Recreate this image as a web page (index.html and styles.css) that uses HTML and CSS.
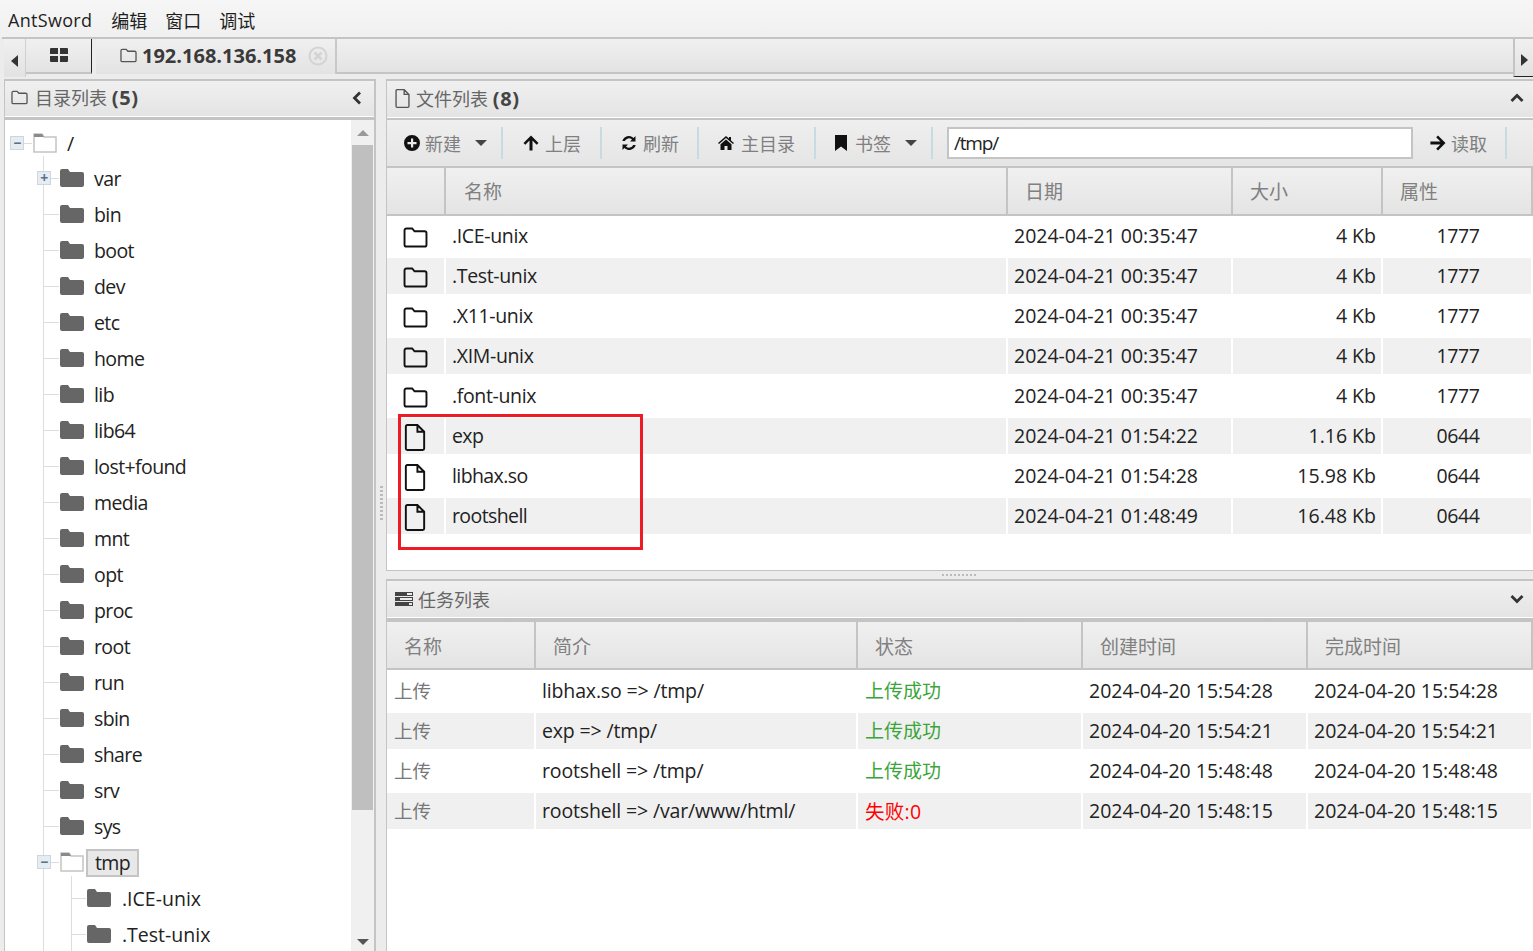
FILE: index.html
```html
<!DOCTYPE html>
<html lang="zh-CN">
<head>
  <meta charset="UTF-8" />
  <title>AntSword</title>
  <link rel="stylesheet" href="styles.css">
</head>
<body>
  <svg class="defs" width="0" height="0">
    <symbol id="folder-o" viewBox="0 0 26 22"><path d="M3.5 1.5h6l2.5 3h10.5a2 2 0 0 1 2 2v12a2 2 0 0 1-2 2h-19a2 2 0 0 1-2-2v-15a2 2 0 0 1 2-2z" fill="none" stroke="currentColor" stroke-width="2"/></symbol>
    <symbol id="file-o" viewBox="0 0 22 28"><path d="M3 1h10.5l7 7v17.5a1.5 1.5 0 0 1-1.500 1.500h-16a1.500 1.500 0 0 1-1.500-1.500v-23a1.500 1.500 0 0 1 1.500-1.500zM13.500 1v7h7" fill="none" stroke="currentColor" stroke-width="2"/></symbol>
    <symbol id="folder" viewBox="0 0 24 18"><path d="M0 2a2 2 0 0 1 2-2h6l2 3h12a2 2 0 0 1 2 2v11a2 2 0 0 1-2 2h-20a2 2 0 0 1-2-2z" fill="currentColor"/></symbol>
    <symbol id="tree-open" viewBox="0 0 24 20"><path d="M1 1h8l2 3h12v15h-22z" fill="#fff" stroke="#c4c4c4" stroke-width="1.500"/><path d="M1 1h8l2 3h-10z" fill="#8a8a8a"/></symbol>
    <symbol id="grid" viewBox="0 0 18 14"><path d="M0 1a1 1 0 0 1 1-1h7v6h-8zM10 0h7a1 1 0 0 1 1 1v5h-8zM0 8h8v6h-7a1 1 0 0 1-1-1zM10 8h8v5a1 1 0 0 1-1 1h-7z" fill="currentColor"/></symbol>
    <symbol id="plus-circle" viewBox="0 0 16 16"><path fill-rule="evenodd" d="M8 0a8 8 0 1 1 0 16a8 8 0 0 1 0-16zM7 3.500v3.500h-3.500v2.200h3.500v3.300h2.200v-3.300h3.300v-2.200h-3.300v-3.500z" fill="currentColor"/></symbol>
    <symbol id="arrow-up" viewBox="0 0 16 16"><path d="M8 .5l7.500 7.500-1.800 1.800-4.200-4.200v10h-3v-10l-4.200 4.200-1.800-1.800z" fill="currentColor"/></symbol>
    <symbol id="arrow-right" viewBox="0 0 16 16"><path d="M15.500 8l-7.500 7.500-1.800-1.800 4.200-4.200h-10v-3h10l-4.200-4.200 1.800-1.800z" fill="currentColor"/></symbol>
    <symbol id="refresh" viewBox="0 0 16 16"><path d="M14.500 1v5.500h-5.500l2-2a4.500 4.500 0 0 0-7.200 1.500h-2.500a6.800 6.800 0 0 1 11.300-3.100zM1.500 15v-5.500h5.500l-2 2a4.500 4.500 0 0 0 7.200-1.500h2.500a6.800 6.800 0 0 1-11.300 3.100z" fill="currentColor"/></symbol>
    <symbol id="home" viewBox="0 0 16 14"><path d="M8 0l3 2.600v-1.600h2v3.400l3 2.600-1 1.100-7-6-7 6-1-1.100zM8 3.500l5.500 4.700v5.800h-4v-4h-3v4h-4v-5.800z" fill="currentColor"/></symbol>
    <symbol id="bookmark" viewBox="0 0 12 16"><path d="M0 0h12v16l-6-4.500-6 4.500z" fill="currentColor"/></symbol>
    <symbol id="tasks" viewBox="0 0 18 14"><path fill-rule="evenodd" d="M0 0h18v4h-18zM12 1v2h5v-2zM0 5h18v4h-18zM5 6v2h12v-2zM0 10h18v4h-18zM14 11v2h3v-2z" fill="currentColor"/></symbol>
    <symbol id="close-circle" viewBox="0 0 20 20"><circle cx="10" cy="10" r="8.500" fill="none" stroke="currentColor" stroke-width="2.200"/><path d="M6.500 6.500l7 7M13.500 6.500l-7 7" stroke="currentColor" stroke-width="2.800"/></symbol>
    <symbol id="chev-left" viewBox="0 0 10 14"><path d="M8 1.500l-5.500 5.500 5.500 5.500" fill="none" stroke="currentColor" stroke-width="2.800"/></symbol>
    <symbol id="chev-up" viewBox="0 0 14 10"><path d="M1.500 8l5.500-5.500 5.500 5.500" fill="none" stroke="currentColor" stroke-width="2.800"/></symbol>
    <symbol id="chev-down" viewBox="0 0 14 10"><path d="M1.500 2l5.500 5.500 5.500-5.500" fill="none" stroke="currentColor" stroke-width="2.800"/></symbol>
  </svg>

  <nav class="menubar">
    <span class="menu-item">AntSword</span>
    <span class="menu-item">编辑</span>
    <span class="menu-item">窗口</span>
    <span class="menu-item">调试</span>
  </nav>

  <div class="tabbar">
    <div class="tab-scroll"><span class="tri tri-left"></span></div>
    <div class="tab tab-home"><svg class="ico-grid"><use href="#grid"/></svg></div>
    <div class="tab tab-host">
      <svg class="ico-tab"><use href="#folder-o"/></svg>
      <span class="tab-title">192.168.136.158</span>
      <svg class="ico-close"><use href="#close-circle"/></svg>
    </div>
    <div class="tab-fill"></div>
    <div class="tab-scroll tab-scroll-right"><span class="tri tri-right"></span></div>
  </div>

  <main class="workspace">
    <aside class="panel tree-panel">
      <div class="panel-head">
        <svg class="ico-head"><use href="#folder-o"/></svg>
        <span class="head-title">目录列表 <b>(5)</b></span>
        <svg class="ico-chev-left"><use href="#chev-left"/></svg>
      </div>
      <div class="tree-body">
        <div class="tree">
          <div class="node root"><span class="toggle">−</span><svg class="ico-open"><use href="#tree-open"/></svg><span class="label">/</span></div>
          <div class="level-1">
            <div class="node"><span class="toggle">+</span><svg class="ico-folder"><use href="#folder"/></svg><span class="label">var</span></div>
            <div class="node"><svg class="ico-folder"><use href="#folder"/></svg><span class="label">bin</span></div>
            <div class="node"><svg class="ico-folder"><use href="#folder"/></svg><span class="label">boot</span></div>
            <div class="node"><svg class="ico-folder"><use href="#folder"/></svg><span class="label">dev</span></div>
            <div class="node"><svg class="ico-folder"><use href="#folder"/></svg><span class="label">etc</span></div>
            <div class="node"><svg class="ico-folder"><use href="#folder"/></svg><span class="label">home</span></div>
            <div class="node"><svg class="ico-folder"><use href="#folder"/></svg><span class="label">lib</span></div>
            <div class="node"><svg class="ico-folder"><use href="#folder"/></svg><span class="label">lib64</span></div>
            <div class="node"><svg class="ico-folder"><use href="#folder"/></svg><span class="label">lost+found</span></div>
            <div class="node"><svg class="ico-folder"><use href="#folder"/></svg><span class="label">media</span></div>
            <div class="node"><svg class="ico-folder"><use href="#folder"/></svg><span class="label">mnt</span></div>
            <div class="node"><svg class="ico-folder"><use href="#folder"/></svg><span class="label">opt</span></div>
            <div class="node"><svg class="ico-folder"><use href="#folder"/></svg><span class="label">proc</span></div>
            <div class="node"><svg class="ico-folder"><use href="#folder"/></svg><span class="label">root</span></div>
            <div class="node"><svg class="ico-folder"><use href="#folder"/></svg><span class="label">run</span></div>
            <div class="node"><svg class="ico-folder"><use href="#folder"/></svg><span class="label">sbin</span></div>
            <div class="node"><svg class="ico-folder"><use href="#folder"/></svg><span class="label">share</span></div>
            <div class="node"><svg class="ico-folder"><use href="#folder"/></svg><span class="label">srv</span></div>
            <div class="node"><svg class="ico-folder"><use href="#folder"/></svg><span class="label">sys</span></div>
            <div class="node"><span class="toggle">−</span><svg class="ico-open"><use href="#tree-open"/></svg><span class="label selected">tmp</span></div>
            <div class="level-2">
              <div class="node"><svg class="ico-folder"><use href="#folder"/></svg><span class="label wide">.ICE-unix</span></div>
              <div class="node"><svg class="ico-folder"><use href="#folder"/></svg><span class="label wide">.Test-unix</span></div>
            </div>
          </div>
        </div>
        <div class="scrollbar">
          <span class="tri tri-up"></span>
          <div class="thumb"></div>
          <span class="tri tri-down"></span>
        </div>
      </div>
    </aside>

    <div class="v-split"><span class="v-grip"></span></div>

    <section class="right">
      <div class="panel files-panel">
        <div class="panel-head">
          <svg class="ico-head-file"><use href="#file-o"/></svg>
          <span class="head-title">文件列表 <b>(8)</b></span>
          <svg class="ico-chev"><use href="#chev-up"/></svg>
        </div>
        <div class="toolbar">
          <span class="tool tool-new"><svg class="ico-tool"><use href="#plus-circle"/></svg>新建<span class="tri tri-caret"></span></span>
          <span class="tool tool-up"><svg class="ico-tool"><use href="#arrow-up"/></svg>上层</span>
          <span class="tool tool-refresh"><svg class="ico-tool"><use href="#refresh"/></svg>刷新</span>
          <span class="tool tool-home"><svg class="ico-tool"><use href="#home"/></svg>主目录</span>
          <span class="tool tool-mark"><svg class="ico-tool ico-mark"><use href="#bookmark"/></svg>书签<span class="tri tri-caret"></span></span>
          <span class="path-wrap"><input class="path-input" type="text" value="/tmp/" /></span>
          <span class="tool tool-read"><svg class="ico-tool"><use href="#arrow-right"/></svg>读取</span>
        </div>
        <div class="grid file-grid grid-head">
          <div class="hcell"></div>
          <div class="hcell pad-name">名称</div>
          <div class="hcell">日期</div>
          <div class="hcell">大小</div>
          <div class="hcell">属性</div>
        </div>
        <div class="rows">
          <div class="grid file-grid row">
            <div class="cell cell-icon"><svg class="ico-row"><use href="#folder-o"/></svg></div><div class="cell">.ICE-unix</div><div class="cell num">2024-04-21 00:35:47</div><div class="cell num right-align">4 Kb</div><div class="cell center">1777</div>
          </div>
          <div class="grid file-grid row">
            <div class="cell cell-icon"><svg class="ico-row"><use href="#folder-o"/></svg></div><div class="cell">.Test-unix</div><div class="cell num">2024-04-21 00:35:47</div><div class="cell num right-align">4 Kb</div><div class="cell center">1777</div>
          </div>
          <div class="grid file-grid row">
            <div class="cell cell-icon"><svg class="ico-row"><use href="#folder-o"/></svg></div><div class="cell">.X11-unix</div><div class="cell num">2024-04-21 00:35:47</div><div class="cell num right-align">4 Kb</div><div class="cell center">1777</div>
          </div>
          <div class="grid file-grid row">
            <div class="cell cell-icon"><svg class="ico-row"><use href="#folder-o"/></svg></div><div class="cell">.XIM-unix</div><div class="cell num">2024-04-21 00:35:47</div><div class="cell num right-align">4 Kb</div><div class="cell center">1777</div>
          </div>
          <div class="grid file-grid row">
            <div class="cell cell-icon"><svg class="ico-row"><use href="#folder-o"/></svg></div><div class="cell">.font-unix</div><div class="cell num">2024-04-21 00:35:47</div><div class="cell num right-align">4 Kb</div><div class="cell center">1777</div>
          </div>
          <div class="grid file-grid row">
            <div class="cell cell-icon"><svg class="ico-row-file"><use href="#file-o"/></svg></div><div class="cell tight">exp</div><div class="cell num">2024-04-21 01:54:22</div><div class="cell num right-align">1.16 Kb</div><div class="cell center">0644</div>
          </div>
          <div class="grid file-grid row">
            <div class="cell cell-icon"><svg class="ico-row-file"><use href="#file-o"/></svg></div><div class="cell tight">libhax.so</div><div class="cell num">2024-04-21 01:54:28</div><div class="cell num right-align">15.98 Kb</div><div class="cell center">0644</div>
          </div>
          <div class="grid file-grid row">
            <div class="cell cell-icon"><svg class="ico-row-file"><use href="#file-o"/></svg></div><div class="cell tight">rootshell</div><div class="cell num">2024-04-21 01:48:49</div><div class="cell num right-align">16.48 Kb</div><div class="cell center">0644</div>
          </div>
          <div class="red-box"></div>
        </div>
      </div>

      <div class="h-split"><span class="h-grip"></span></div>

      <div class="panel tasks-panel">
        <div class="panel-head">
          <svg class="ico-head-tasks"><use href="#tasks"/></svg>
          <span class="head-title">任务列表</span>
          <svg class="ico-chev"><use href="#chev-down"/></svg>
        </div>
        <div class="grid task-grid grid-head task-head">
          <div class="hcell">名称</div>
          <div class="hcell">简介</div>
          <div class="hcell">状态</div>
          <div class="hcell">创建时间</div>
          <div class="hcell">完成时间</div>
        </div>
        <div class="rows task-rows">
          <div class="grid task-grid row">
            <div class="cell muted">上传</div><div class="cell task-desc">libhax.so =&gt; /tmp/</div><div class="cell ok">上传成功</div><div class="cell num">2024-04-20 15:54:28</div><div class="cell num">2024-04-20 15:54:28</div>
          </div>
          <div class="grid task-grid row">
            <div class="cell muted">上传</div><div class="cell task-desc">exp =&gt; /tmp/</div><div class="cell ok">上传成功</div><div class="cell num">2024-04-20 15:54:21</div><div class="cell num">2024-04-20 15:54:21</div>
          </div>
          <div class="grid task-grid row">
            <div class="cell muted">上传</div><div class="cell task-desc">rootshell =&gt; /tmp/</div><div class="cell ok">上传成功</div><div class="cell num">2024-04-20 15:48:48</div><div class="cell num">2024-04-20 15:48:48</div>
          </div>
          <div class="grid task-grid row">
            <div class="cell muted">上传</div><div class="cell task-desc">rootshell =&gt; /var/www/html/</div><div class="cell fail">失败:0</div><div class="cell num">2024-04-20 15:48:15</div><div class="cell num">2024-04-20 15:48:15</div>
          </div>
        </div>
      </div>
    </section>
  </main>
</body>
</html>
```

FILE: styles.css
```css
* {
  box-sizing: border-box;
}

html, body {
  margin: 0;
  height: 100%;
  overflow: hidden;
}

body {
  width: 1533px;
  height: 951px;
  background: #ececec;
  color: #222;
  font-family: "Open Sans", "Noto Sans CJK SC", sans-serif;
  font-size: 19.5px;
  letter-spacing: -0.35px;
}

.defs {
  position: absolute;
}

svg {
  display: block;
  flex: none;
}

/* menu */
.menubar {
  height: 37px;
  display: flex;
  align-items: center;
  padding: 2px 0 0 8px;
  gap: 18px;
  background: linear-gradient(#f6f6f6, #f0f0f0);
  font-size: 18px;
  letter-spacing: 0;
  color: #1e1e1e;
}

.menu-item:first-child {
  margin-right: 1px;
  letter-spacing: 0.3px;
}

/* tabs */
.tabbar {
  height: 42px;
  margin-left: 2px;
  display: flex;
  border-top: 2px solid #c4c4c4;
  background: #ececec;
}

.tab-scroll {
  width: 22px;
  height: 38px;
  margin-left: 2px;
  display: flex;
  align-items: center;
  justify-content: center;
  padding-top: 6px;
  background: linear-gradient(#f0f0f0, #e2e2e2);
  border-right: 1px solid #d0d0d0;
}

.tab-scroll-right {
  width: 20px;
  margin-left: 0;
  padding: 4px 0 0 1px;
  border-left: 2px solid #c4c4c4;
  border-right: 0;
  border-bottom: 1px solid #222;
}

.tab {
  height: 35px;
  display: flex;
  align-items: center;
  padding-bottom: 2px;
  background: linear-gradient(#f0f0f0, #e3e3e3);
  border-bottom: 2px solid #c4c4c4;
}

.tab-home {
  width: 66px;
  justify-content: center;
  border-right: 1px solid #222;
}

.tab-host {
  width: 241px;
  margin-left: 4px;
  padding-left: 24px;
  border-right: 2px solid #c8c8c8;
  border-bottom: 0;
}

.tab-title {
  margin-left: 5px;
  font-weight: 700;
  font-size: 20px;
  letter-spacing: 0;
  color: #3a3a3a;
}

.tab-fill {
  flex: 1;
  height: 35px;
  background: linear-gradient(#f0f0f0, #e3e3e3);
  border-bottom: 2px solid #c4c4c4;
}

.ico-grid {
  width: 18px;
  height: 14px;
  color: #333;
}

.ico-tab {
  width: 17px;
  height: 15px;
  color: #555;
}

.ico-close {
  width: 20px;
  height: 20px;
  margin-left: 12px;
  color: #d4d4d4;
}

/* little triangles */
.tri {
  display: block;
  width: 0;
  height: 0;
  border-style: solid;
  border-color: transparent;
}

.tri-left {
  border-width: 6px 7px 6px 0;
  border-right-color: #333;
}

.tri-right {
  border-width: 6px 0 6px 7px;
  border-left-color: #333;
}

.tri-up {
  border-width: 0 6px 6px;
  border-bottom-color: #999;
}

.tri-down {
  border-width: 6px 6px 0;
  border-top-color: #555;
}

.tri-caret {
  margin-left: 14px;
  border-width: 6px 6px 0;
  border-top-color: #444;
}

/* main split */
.workspace {
  display: flex;
  height: 872px;
  padding-left: 4px;
}

.panel {
  background: #fff;
}

.tree-panel {
  width: 372px;
  display: flex;
  flex-direction: column;
  border-top: 2px solid #c4c4c4;
  border-right: 2px solid #c4c4c4;
  border-left: 1px solid #c4c4c4;
}

.panel-head {
  height: 37px;
  flex: none;
  display: flex;
  align-items: center;
  padding-bottom: 2px;
  background: linear-gradient(#f0f0f0, #e4e4e4);
  color: #666;
  font-size: 18px;
  letter-spacing: 0;
  border-bottom: 1px solid #fff;
}

.head-title b {
  font-size: 20px;
  letter-spacing: 0.7px;
  color: #444;
}

.tree-panel .panel-head {
  padding-left: 6px;
  height: 36px;
}

.ico-head {
  width: 17px;
  height: 15px;
  margin-right: 7px;
  color: #555;
}

.ico-chev-left {
  width: 10px;
  height: 14px;
  margin-left: auto;
  margin-right: 12px;
  color: #333;
}

.tree-body {
  flex: 1;
  min-height: 0;
  display: flex;
  border-top: 3px solid #c4c4c4;
  overflow: hidden;
}

.tree {
  flex: 1;
  padding: 4px 0 0 0;
  height: 900px;
}

.node {
  position: relative;
  height: 36px;
  display: flex;
  align-items: center;
  color: #222;
}

.root {
  padding-left: 28px;
  padding-top: 2px;
}

.level-1 {
  position: relative;
  padding-left: 55px;
}

.level-2 {
  position: relative;
  padding-left: 27px;
}

.level-1::before,
.level-2::before {
  content: "";
  position: absolute;
  top: -4px;
  bottom: 0;
  left: 38px;
  width: 1px;
  background: #ddd;
}

.level-2::before {
  left: 11px;
}

.level-1 > .node::before,
.level-2 > .node::before {
  content: "";
  position: absolute;
  top: 50%;
  left: -16px;
  width: 15px;
  height: 1px;
  background: #ddd;
}

.toggle {
  position: absolute;
  z-index: 1;
  left: -23px;
  width: 14px;
  height: 14px;
  display: flex;
  align-items: center;
  justify-content: center;
  border: 1px solid #ccd6de;
  background: #e6edf2;
  color: #5a7185;
  font-size: 14px;
  font-weight: 700;
  line-height: 1;
}

.root .toggle {
  left: 5px;
}

.root .toggle::after {
  content: "";
  position: absolute;
  left: 13px;
  top: 6px;
  width: 8px;
  height: 1px;
  background: #ddd;
}

.ico-folder {
  width: 24px;
  height: 18px;
  margin-top: -1px;
  color: #666;
}

.ico-open {
  width: 24px;
  height: 20px;
  margin-top: -1px;
}

.label {
  margin-left: 9px;
  padding: 0 1px;
  letter-spacing: -0.6px;
}

.wide {
  margin-left: 10px;
  letter-spacing: 0;
}

.selected {
  margin-left: 2px;
  height: 28px;
  padding: 0 7px;
  line-height: 24px;
  margin-top: 1px;
  background: #e8e8e8;
  border: 2px solid #c4c4c4;
}

.scrollbar {
  position: relative;
  width: 23px;
  background: #f0f0f0;
  flex: none;
}

.thumb {
  position: absolute;
  top: 25px;
  left: 1px;
  width: 21px;
  height: 665px;
  background: #bfbfbf;
}

.scrollbar .tri-up {
  position: absolute;
  top: 10px;
  left: 6px;
}

.scrollbar .tri-down {
  position: absolute;
  bottom: 6px;
  left: 6px;
}

.v-split {
  width: 10px;
  display: flex;
  align-items: center;
  justify-content: center;
  padding-bottom: 23px;
  background: #ececec;
}

.v-grip {
  width: 3px;
  height: 36px;
  background: repeating-linear-gradient(#bbb 0 2px, transparent 2px 4px);
}

/* right column */
.right {
  flex: 1;
  min-width: 0;
  display: flex;
  flex-direction: column;
}

.files-panel {
  height: 492px;
  flex: none;
  border-top: 2px solid #c4c4c4;
  border-left: 1px solid #c4c4c4;
  border-bottom: 1px solid #c4c4c4;
}

.right .panel-head {
  padding-left: 8px;
  padding-right: 9px;
  justify-content: flex-start;
}

.ico-head-file {
  width: 15px;
  height: 19px;
  margin-right: 6px;
  color: #555;
}

.ico-head-tasks {
  width: 18px;
  height: 14px;
  margin-right: 5px;
  color: #444;
}

.ico-chev {
  width: 14px;
  height: 10px;
  margin-left: auto;
  color: #333;
}

.toolbar {
  height: 50px;
  display: flex;
  align-items: center;
  background: linear-gradient(#efefef, #e5e5e5);
  border-top: 2px solid #c4c4c4;
  border-bottom: 2px solid #c4c4c4;
  font-size: 18px;
  letter-spacing: 0;
  color: #808080;
}

.tool {
  height: 32px;
  flex: none;
  display: flex;
  align-items: center;
  border-right: 2px solid #c9dbe2;
}

.ico-tool {
  width: 16px;
  height: 16px;
  margin-right: 5px;
  color: #111;
}

.ico-mark {
  width: 12px;
  margin-right: 8px;
}

.tool-new {
  width: 116px;
  padding-left: 17px;
}

.tool-up .ico-tool,
.tool-refresh .ico-tool {
  margin-right: 6px;
}

.tool-up {
  width: 99px;
  padding-left: 20px;
}

.tool-refresh {
  width: 97px;
  padding-left: 19px;
}

.tool-home {
  width: 117px;
  padding-left: 19px;
}

.tool-home .ico-tool {
  margin-right: 7px;
}

.tool-mark {
  width: 117px;
  padding-left: 19px;
}

.path-wrap {
  width: 495px;
  flex: none;
  padding-left: 14px;
}

.path-input {
  display: block;
  width: 466px;
  height: 32px;
  padding: 0 5px;
  border: 2px solid #c4c4c4;
  background: #fff;
  color: #222;
  font: inherit;
  font-family: "Open Sans", sans-serif;
  font-size: 19px;
  letter-spacing: -1.2px;
  outline: none;
}

.tool-read {
  width: 79px;
  padding-left: 2px;
}

.grid {
  display: grid;
  column-gap: 2px;
}

.file-grid {
  grid-template-columns: 57px 560px 223px 148px 148px;
}

.task-grid {
  grid-template-columns: 147px 320px 223px 223px 223px;
}

.grid-head {
  height: 48px;
  background: #fff;
  border-bottom: 2px solid #c4c4c4;
  column-gap: 0;
}

.file-grid.grid-head {
  grid-template-columns: 59px 562px 225px 150px 150px;
}

.task-grid.grid-head {
  grid-template-columns: 149px 322px 225px 225px 225px;
}

.hcell {
  display: flex;
  align-items: center;
  padding-left: 17px;
  background: linear-gradient(#f0f0f0, #e4e4e4);
  border-right: 2px solid #c4c4c4;
  color: #808080;
  font-size: 19px;
  letter-spacing: 0;
}

.pad-name {
  padding-left: 18px;
}

.rows {
  position: relative;
  padding-top: 2px;
  display: flex;
  flex-direction: column;
  gap: 4px;
  background: #fff;
}

.row {
  height: 36px;
}

.row:nth-child(even) .cell {
  background: #f0f0f0;
}

.cell {
  display: flex;
  align-items: center;
  padding-left: 6px;
  padding-bottom: 2px;
  white-space: nowrap;
  color: #222;
}

.num {
  letter-spacing: 0;
}

.tight {
  letter-spacing: -0.6px;
}

.task-desc {
  letter-spacing: -0.15px;
}

.cell-icon {
  padding: 2px 0 0 16px;
  color: #111;
}

.right-align {
  justify-content: flex-end;
  padding: 0 5px 2px 0;
}

.center {
  justify-content: center;
  padding: 0 0 2px 2px;
}

.ico-row {
  width: 25px;
  height: 21px;
}

.ico-row-file {
  width: 22px;
  height: 27px;
  margin-left: 1px;
}

.red-box {
  position: absolute;
  top: 198px;
  left: 11px;
  width: 245px;
  height: 136px;
  border: 3px solid #ed1c24;
}

.h-split {
  height: 8px;
  flex: none;
  display: flex;
  justify-content: center;
  padding: 3px 0 0 0;
  background: #ececec;
}

.h-grip {
  width: 36px;
  height: 2px;
  background: repeating-linear-gradient(90deg, #bbb 0 2px, transparent 2px 4px);
}

.tasks-panel {
  flex: 1;
  border-top: 2px solid #c4c4c4;
  border-left: 1px solid #c4c4c4;
}

.tasks-panel .panel-head {
  height: 37px;
  padding-bottom: 0;
}

.task-head {
  border-top: 4px solid #c4c4c4;
  height: 52px;
}

.task-head .hcell {
  padding-top: 1px;
}

.task-rows {
  padding-top: 3px;
}

.muted {
  color: #777;
  padding-left: 7px;
  font-size: 18.5px;
  letter-spacing: 0;
}

.ok {
  color: #3aa53a;
  padding-left: 7px;
  font-size: 19px;
  letter-spacing: 0;
}

.fail {
  color: #f00;
  padding-left: 7px;
  font-size: 19.5px;
  letter-spacing: 0.3px;
}
```
